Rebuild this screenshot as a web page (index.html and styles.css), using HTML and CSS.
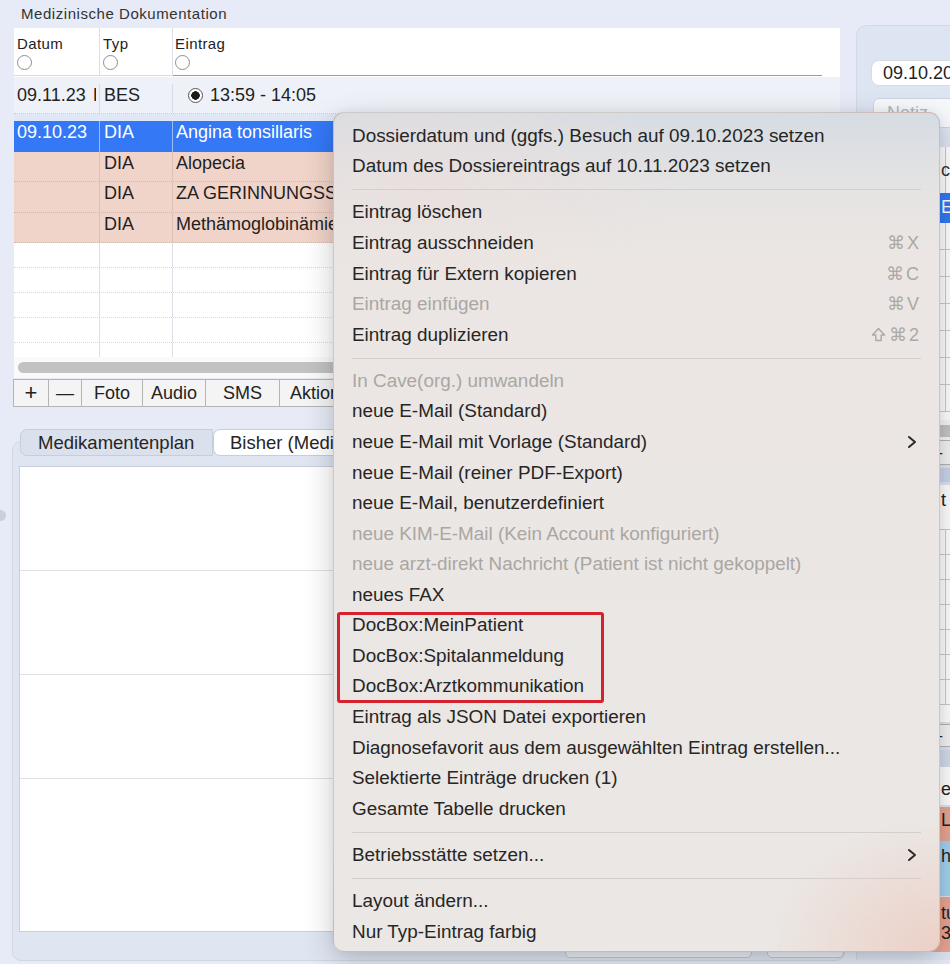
FILE: index.html
```html
<!DOCTYPE html>
<html lang="de">
<head>
<meta charset="utf-8">
<title>Medizinische Dokumentation</title>
<link rel="stylesheet" href="styles.css">
</head>
<body>
<div class="app">
  <div class="left">
    <div class="title">Medizinische Dokumentation</div>
    <div class="table">
      <div class="thead">
        <div class="hcell c-datum"><span class="hl">Datum</span><i class="radio"></i></div>
        <div class="hcell c-typ"><span class="hl">Typ</span><i class="radio"></i></div>
        <div class="hcell c-eintrag"><span class="hl">Eintrag</span><i class="radio"></i></div>
      </div>
      <div class="row row-first">
        <div class="cell c-datum">09.11.23 <span class="cut">I</span></div>
        <div class="cell c-typ">BES</div>
        <div class="cell c-eintrag"><i class="radio on"></i>13:59 - 14:05</div>
      </div>
      <div class="spacer"></div>
      <div class="row row-sel">
        <div class="cell c-datum">09.10.23</div>
        <div class="cell c-typ">DIA</div>
        <div class="cell c-eintrag">Angina tonsillaris</div>
      </div>
      <div class="row row-dia">
        <div class="cell c-datum"></div>
        <div class="cell c-typ">DIA</div>
        <div class="cell c-eintrag">Alopecia</div>
      </div>
      <div class="row row-dia">
        <div class="cell c-datum"></div>
        <div class="cell c-typ">DIA</div>
        <div class="cell c-eintrag">ZA GERINNUNGSSTÖRUNG</div>
      </div>
      <div class="row row-dia">
        <div class="cell c-datum"></div>
        <div class="cell c-typ">DIA</div>
        <div class="cell c-eintrag">Methämoglobinämie</div>
      </div>
      <div class="row row-empty"><div class="cell c-datum"></div><div class="cell c-typ"></div><div class="cell c-eintrag"></div></div>
      <div class="row row-empty"><div class="cell c-datum"></div><div class="cell c-typ"></div><div class="cell c-eintrag"></div></div>
      <div class="row row-empty"><div class="cell c-datum"></div><div class="cell c-typ"></div><div class="cell c-eintrag"></div></div>
      <div class="row row-empty"><div class="cell c-datum"></div><div class="cell c-typ"></div><div class="cell c-eintrag"></div></div>
      <div class="row row-last"><div class="cell c-datum"></div><div class="cell c-typ"></div><div class="cell c-eintrag"></div></div>
      <div class="hscroll"><div class="thumb"></div></div>
    </div>
    <div class="btnbar">
      <div class="btn b-plus">+</div>
      <div class="btn b-minus">—</div>
      <div class="btn b-foto">Foto</div>
      <div class="btn b-audio">Audio</div>
      <div class="btn b-sms">SMS</div>
      <div class="btn b-akt">Aktionen</div>
    </div>
    <div class="medsec">
      <div class="tabs">
        <div class="tab">Medikamentenplan</div>
        <div class="tab active">Bisher (Medikamente)</div>
      </div>
      <div class="medpanel">
        <div class="medbox">
          <div class="medrow"></div>
          <div class="medrow"></div>
          <div class="medrow"></div>
          <div class="medrow last"></div>
        </div>
        <div class="medfoot">
          <div class="fbtn f1"></div>
          <div class="fbtn f2"></div>
        </div>
      </div>
    </div>
  </div>

  <div class="right">
    <div class="rpanel">
      <div class="datepill">09.10.2023</div>
      <div class="notiz">Notiz</div>
      <div class="rgap"></div>
      <div class="rtable">
        <div class="rt-head"><span class="rc">c</span></div>
        <div class="rt-sel"><span class="rc">E</span></div>
        <div class="rt-row"></div><div class="rt-row"></div><div class="rt-row"></div><div class="rt-row"></div>
        <div class="rt-row"></div><div class="rt-row"></div><div class="rt-row"></div>
        <div class="rt-end"></div>
        <div class="rt-scroll"><div class="rt-thumb"></div></div>
      </div>
      <div class="rbtnbar"><div class="rbtn">+</div><div class="rbtn">—</div></div>
      <div class="rtabstrip"></div>
      <div class="rtable">
        <div class="rt-head2"><span class="rc">t</span></div>
        <div class="rt-row2"></div><div class="rt-row2"></div><div class="rt-row2"></div><div class="rt-row2"></div>
        <div class="rt-row2"></div><div class="rt-row2"></div><div class="rt-row2"></div>
        <div class="rt-end2"></div>
      </div>
      <div class="rbtnbar small"><div class="rbtn">+</div><div class="rbtn">—</div></div>
      <div class="rstrip"></div>
      <div class="rlist">
        <div class="ri ri-white"><span class="rc">es</span></div>
        <div class="ri ri-salmon"><span class="rc">Lo</span></div>
        <div class="ri ri-blue"><span class="rc">h</span></div>
        <div class="ri ri-salmon2"><span class="rc">tu<br>3</span></div>
      </div>
    </div>
  </div>
</div>

<div class="splitdot"></div>

<div class="menu">
  <div class="mi">Dossierdatum und (ggfs.) Besuch auf 09.10.2023 setzen</div>
  <div class="mi">Datum des Dossiereintrags auf 10.11.2023 setzen</div>
  <div class="sep"></div>
  <div class="mi">Eintrag löschen</div>
  <div class="mi"><span>Eintrag ausschneiden</span><span class="kbd">⌘X</span></div>
  <div class="mi"><span>Eintrag für Extern kopieren</span><span class="kbd">⌘C</span></div>
  <div class="mi dis"><span>Eintrag einfügen</span><span class="kbd">⌘V</span></div>
  <div class="mi"><span>Eintrag duplizieren</span><span class="kbd"><svg class="shift" width="15" height="15" viewBox="0 0 15 15"><path d="M7.5 1.5 L13.5 8 H10.2 V13.5 H4.8 V8 H1.5 Z" fill="none" stroke="#aca8a5" stroke-width="1.4" stroke-linejoin="round"/></svg>⌘2</span></div>
  <div class="sep"></div>
  <div class="mi dis">In Cave(org.) umwandeln</div>
  <div class="mi">neue E-Mail (Standard)</div>
  <div class="mi"><span>neue E-Mail mit Vorlage (Standard)</span><svg class="chev" width="10" height="14" viewBox="0 0 10 14"><polyline points="2,2 8,7 2,12" fill="none" stroke="#2b2b2b" stroke-width="2" stroke-linecap="round" stroke-linejoin="round"/></svg></div>
  <div class="mi">neue E-Mail (reiner PDF-Export)</div>
  <div class="mi">neue E-Mail, benutzerdefiniert</div>
  <div class="mi dis">neue KIM-E-Mail (Kein Account konfiguriert)</div>
  <div class="mi dis">neue arzt-direkt Nachricht (Patient ist nicht gekoppelt)</div>
  <div class="mi">neues FAX</div>
  <div class="mi">DocBox:MeinPatient</div>
  <div class="mi">DocBox:Spitalanmeldung</div>
  <div class="mi">DocBox:Arztkommunikation</div>
  <div class="mi">Eintrag als JSON Datei exportieren</div>
  <div class="mi">Diagnosefavorit aus dem ausgewählten Eintrag erstellen...</div>
  <div class="mi">Selektierte Einträge drucken (1)</div>
  <div class="mi">Gesamte Tabelle drucken</div>
  <div class="sep"></div>
  <div class="mi"><span>Betriebsstätte setzen...</span><svg class="chev" width="10" height="14" viewBox="0 0 10 14"><polyline points="2,2 8,7 2,12" fill="none" stroke="#2b2b2b" stroke-width="2" stroke-linecap="round" stroke-linejoin="round"/></svg></div>
  <div class="sep"></div>
  <div class="mi">Layout ändern...</div>
  <div class="mi">Nur Typ-Eintrag farbig</div>
  <div class="redbox"></div>
</div>
</body>
</html>
```
FILE: styles.css
```css
* { box-sizing: border-box; margin: 0; padding: 0; }
html, body { width: 950px; height: 964px; overflow: hidden; }
body {
  background: #e6ebf7;
  font-family: "Liberation Sans", Arial, "DejaVu Sans", sans-serif;
  color: #222;
  position: relative;
}
.app { display: flex; height: 964px; }

/* ---------- left column ---------- */
.left { width: 845px; flex: none; padding-left: 14px; display: flex; flex-direction: column; }
.title {
  height: 28px; line-height: 28px; padding-left: 7px;
  font-size: 15px; letter-spacing: 0.55px; color: #333;
}
.table { width: 826px; background: #fff; }
.thead { display: flex; height: 49px; background: #fff; }
.hcell {
  height: 48px; padding: 6px 0 0 3px; display: flex; flex-direction: column; align-items: flex-start;
  font-size: 15px; letter-spacing: 0.4px; color: #222;
  border-right: 1px solid #dde1e7; border-bottom: 1px solid #d9dde3;
}
.hcell .hl { height: 19px; line-height: 19px; }
.hcell .radio { margin-top: 2px; }
.hcell.c-eintrag { border-right: 0; border-bottom-color: #9c9c9c; margin-right: 18px; padding-left: 2px; }
.c-datum { width: 86px; flex: none; }
.c-typ { width: 73px; flex: none; }
.c-eintrag { flex: 1; min-width: 0; }
.radio {
  display: inline-block; width: 15px; height: 15px; border-radius: 50%;
  border: 1px solid #8e8e8e; background: #fff; flex: none;
}
.radio.on {
  width: 15px; height: 15px; border: 1px solid #555; margin: 0 7px 0 6px;
  background: radial-gradient(circle, #1b1b1b 0 4px, #fff 4.5px);
  vertical-align: -2px;
}

.row { display: flex; height: 30.5px; line-height: 22px; font-size: 18px; }
.cell {
  padding-left: 3px; border-right: 1px solid #dcdfe5;
  overflow: hidden; white-space: nowrap; color: #1f1f1f;
}
.cell.c-typ { padding-left: 4px; }
.cell.c-eintrag { border-right: 0; padding-left: 3px; }
.row-first { height: 37px; padding-top: 6.5px; background: #eef1f7; border-bottom: 1px dotted #c5cfe2; }
.row-first .cell { border-right-color: #d7dbe2; }
.row-first .cell.c-eintrag { padding-left: 9px; }
.cut { display: inline-block; width: 3px; overflow: hidden; vertical-align: top; margin-left: 2px; }
.spacer { height: 7px; background: #e1e8f5; }
.row-sel { background: #3478f6; }
.row-sel .cell { color: #fff; border-right-color: #9dbdf6; }
.row-dia { background: #f1d4c9; border-bottom: 1px dotted #d8b6a9; }
.row-dia .cell { border-right-color: #dcc0b5; }
.row-empty { height: 25px; border-bottom: 1px dotted #d9d9d9; }
.row-last { height: 13.5px; }
.hscroll { height: 21px; padding: 5px 4px 0 4px; background: #fafafa; }
.thumb { height: 11px; border-radius: 6px; background: #c2c2c2; }

.btnbar { display: flex; height: 28px; margin-top: 1px; margin-left: -1px; }
.btn {
  height: 28px; line-height: 26px; text-align: center; font-size: 18px;
  background: #f4f4f4; border: 1px solid #b4b4b4; border-right: 0; color: #222;
}
.b-plus { width: 35px; font-size: 22px; }
.b-minus { width: 33px; }
.b-foto { width: 61px; }
.b-audio { width: 63px; }
.b-sms { width: 74px; }
.b-akt { width: 90px; text-align: left; padding-left: 10px; border-right: 1px solid #b4b4b4; }

.medsec { margin-top: 22px; margin-left: -2px; display: flex; flex-direction: column; }
.tabs { display: flex; height: 27px; margin-left: 8px; margin-bottom: -15px; position: relative; z-index: 1; }
.tab {
  height: 27px; line-height: 25px; font-size: 18.5px; color: #262626;
  border: 1px solid #c6cedb; background: #dae1ed; padding: 0 16px 0 17px;
  border-radius: 7px 0 0 7px; width: 193px; white-space: nowrap; overflow: hidden;
}
.tab.active { background: #fff; border-radius: 7px 0 0 7px; border-right: 0; width: 120px; padding: 0 0 0 16px; }
.medpanel {
  width: 833px; height: 520px; background: #dfe6f2; border: 1px solid #d0d7e3;
  border-radius: 9px; padding: 24px 0 0 6px; display: flex; flex-direction: column;
}
.medbox { height: 466px; background: #fff; border: 1px solid #c8cfdb; display: flex; flex-direction: column; }
.medrow { height: 104px; border-bottom: 1px solid #e1e1e1; flex: none; }
.medrow.last { border-bottom: 0; flex: 1; }
.medfoot { display: flex; gap: 15px; padding-left: 546px; padding-top: 4px; }
.fbtn { height: 22px; background: #eef1f6; border: 1px solid #c3c9d3; border-radius: 5px; }
.f1 { width: 193px; }
.f2 { width: 80px; }

/* ---------- right column ---------- */
.right { flex: none; width: 120px; margin-left: 11px; overflow: hidden; }
.rpanel {
  margin-top: 25px; height: 935px; background: #dee5f2;
  border-top: 1px solid #d3dae6; border-left: 1px solid #d3dae6;
  border-radius: 10px 0 0 0; padding-top: 34px; display: flex; flex-direction: column;
}
.datepill {
  margin-left: 14px; height: 26px; width: 110px; background: #fff; border-radius: 8px;
  border: 1px solid #d6dce6; font-size: 18px; line-height: 24px; padding-left: 11px; color: #222;
  white-space: nowrap; overflow: hidden;
}
.notiz {
  margin: 12px 0 0 16px; height: 30px; width: 110px; background: #f7f8fb;
  border: 1px solid #cdd4df; border-radius: 6px; font-size: 18px; line-height: 28px;
  padding-left: 13px; color: #b5b8be;
}
.rgap { height: 19px; }
.rtable { margin-left: 13px; background: #fff; width: 110px; }
.rc { display: block; padding-left: 71px; font-size: 18px; white-space: nowrap; }
.rt-head { height: 46px; background: linear-gradient(90deg, #fff 75px, #c9c9c9 75px 76px, #fff 76px); line-height: 46px; color: #333; }
.rt-sel { height: 30px; background: #3478f6; color: #fff; line-height: 28px; }
.rt-row { height: 27px; border-bottom: 1px solid #cbcbcb; background: linear-gradient(90deg, #fff 75px, #cbcbcb 75px 76px, #fff 76px); }
.rt-end { height: 8px; }
.rt-scroll { height: 20px; padding: 5px 0 0 4px; background: #f6f6f6; }
.rt-thumb { height: 12px; background: #c4c4c4; border-radius: 6px; }
.rbtnbar { display: flex; margin-left: 13px; height: 25px; }
.rbtn { width: 36px; height: 25px; line-height: 23px; text-align: center; font-size: 18px; background: #f4f4f4; border: 1px solid #b4b4b4; border-right: 0; color: #222; }
.rbtn + .rbtn { width: 80px; text-align: left; padding-left: 21px; }
.rtabstrip { height: 14px; margin: 3px 0 3px 13px; background: #c9d5ea; }
.rt-head2 { height: 45px; line-height: 30px; border-bottom: 1px solid #cbcbcb; color: #222; }
.rt-row2 { height: 25px; border-bottom: 1px solid #cbcbcb; background: linear-gradient(90deg, #fff 75px, #cbcbcb 75px 76px, #fff 76px); }
.rt-end2 { height: 17px; }
.rbtnbar.small { height: 23px; margin-top: 2px; }
.rbtnbar.small .rbtn { height: 23px; line-height: 21px; }
.rstrip { height: 17px; margin: 3px 0 0 13px; background: #d3dcec; }
.rlist { margin-left: 13px; width: 110px; display: flex; flex-direction: column; }
.ri { color: #222; font-size: 18px; }
.ri-white { height: 38px; background: #fff; line-height: 44px; }
.ri-salmon { height: 34px; margin-top: 2px; background: #e9a593; line-height: 26px; }
.ri-blue { height: 55px; background: #a3d1f1; line-height: 30px; }
.ri-salmon2 { height: 55px; margin-top: 1px; background: #e9a593; line-height: 20px; padding-top: 6px; }

.splitdot {
  position: absolute; left: -5px; top: 510px; width: 11px; height: 11px;
  border-radius: 50%; background: #c9cfdb;
}

/* ---------- context menu ---------- */
.menu {
  position: absolute; z-index: 10; left: 333px; top: 112px; width: 607px; height: 840px;
  padding-top: 7.7px; border-radius: 11px;
  background:
    radial-gradient(ellipse 170px 130px at 100% 100%, rgba(236, 200, 188, 0.75), rgba(236, 200, 188, 0) 100%),
    radial-gradient(ellipse 260px 120px at 15% 60px, rgba(236, 222, 220, 0.6), rgba(236, 222, 220, 0) 100%),
    linear-gradient(180deg, #d6dce3 0, #e4e3e3 70px, #ebe6e3 140px, #ebe7e4 100%);
  border: 1px solid rgba(0, 0, 0, 0.13);
  box-shadow: 0 10px 32px rgba(0, 0, 0, 0.2), 0 0 10px rgba(0, 0, 0, 0.06);
  font-size: 18.9px; color: #262626;
}
.mi {
  height: 30.57px; line-height: 30.57px; padding: 0 20px 0 18px;
  display: flex; justify-content: space-between; align-items: center; white-space: nowrap;
}
.mi.dis { color: #aaa6a3; }
.kbd { color: #aca8a5; font-size: 18px; letter-spacing: 2px; margin-right: -2px; display: flex; align-items: center; }
.shift { margin-right: 3px; }
.chev { flex: none; margin-right: 2px; }
.sep { height: 15.6px; margin: 0 18px 0 18px; display: flex; align-items: center; }
.sep::after { content: ""; flex: 1; height: 1px; background: #d4cfcc; }
.redbox {
  position: absolute; left: 3px; top: 499px; width: 267px; height: 91px;
  border: 3px solid #d6212f; border-radius: 3px;
}
```
